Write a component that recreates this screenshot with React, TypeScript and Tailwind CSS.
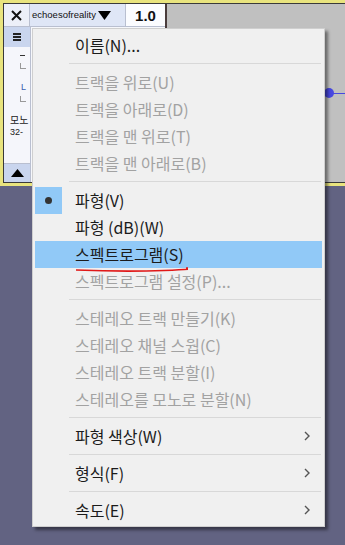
import React from "react";

type It =
  | { kind: "sep" }
  | { kind: "item"; label: string; disabled?: boolean; checked?: boolean; highlight?: boolean; sub?: boolean };

const items: It[] = [
  { kind: "item", label: "이름(N)..." },
  { kind: "sep" },
  { kind: "item", label: "트랙을 위로(U)", disabled: true },
  { kind: "item", label: "트랙을 아래로(D)", disabled: true },
  { kind: "item", label: "트랙을 맨 위로(T)", disabled: true },
  { kind: "item", label: "트랙을 맨 아래로(B)", disabled: true },
  { kind: "sep" },
  { kind: "item", label: "파형(V)", checked: true },
  { kind: "item", label: "파형 (dB)(W)" },
  { kind: "item", label: "스펙트로그램(S)", highlight: true },
  { kind: "item", label: "스펙트로그램 설정(P)...", disabled: true },
  { kind: "sep" },
  { kind: "item", label: "스테레오 트랙 만들기(K)", disabled: true },
  { kind: "item", label: "스테레오 채널 스웝(C)", disabled: true },
  { kind: "item", label: "스테레오 트랙 분할(I)", disabled: true },
  { kind: "item", label: "스테레오를 모노로 분할(N)", disabled: true },
  { kind: "sep" },
  { kind: "item", label: "파형 색상(W)", sub: true },
  { kind: "sep" },
  { kind: "item", label: "형식(F)", sub: true },
  { kind: "sep" },
  { kind: "item", label: "속도(E)", sub: true },
];

function Row({ it }: { it: Extract<It, { kind: "item" }> }) {
  return (
    <div className={`relative flex h-[27px] items-center ${it.highlight ? "bg-[#91c9f7]" : ""}`}>
      <div className={`flex h-full w-[27px] items-center justify-center ${it.checked ? "bg-[#91c9f7]" : ""}`}>
        {it.checked && <div className="h-[7px] w-[7px] rounded-full bg-[#333]" />}
      </div>
      <span
        className={`ml-[13px] whitespace-nowrap text-[16px] leading-none ${it.disabled ? "text-[#a2a2a2]" : "text-[#1b1b1b]"}`}
      >
        {it.label}
      </span>
      {it.sub && (
        <svg className="ml-auto mr-[12px]" width="6" height="10" viewBox="0 0 6 10">
          <polyline points="1,1 5,5 1,9" fill="none" stroke="#555" strokeWidth="1.4" />
        </svg>
      )}
    </div>
  );
}

export default function App() {
  return (
    <div className="relative h-[545px] w-[345px] overflow-hidden bg-[#626382] font-['Noto_Sans_CJK_KR','Noto_Sans',sans-serif]">
      {/* track area */}
      <div className="h-[186px] bg-[#e9e47e] pb-[3px] pt-[3px] pl-[3px]">
        <div className="flex h-full border-l border-t border-b border-[#3a3a3a]">
          {/* control panel */}
          <div className="flex w-[161px] flex-col bg-[#f7f8fc]">
            <div className="flex h-[23px] border-b border-[#b9bfd0]">
              <div className="flex w-[26px] items-center justify-center border-r border-[#b9bfd0] bg-[#eceff8]">
                <svg width="11" height="11" viewBox="0 0 11 11">
                  <path d="M1 1 L10 10 M10 1 L1 10" stroke="#111" strokeWidth="2" />
                </svg>
              </div>
              <div className="flex w-[96px] items-center border-r border-[#b9bfd0] bg-[#dfe6f6] pl-[2px]">
                <span className="font-['Liberation_Sans',sans-serif] text-[9.5px] leading-none text-[#111]">echoesofreality</span>
                <svg className="ml-[2px]" width="13" height="9" viewBox="0 0 13 9">
                  <polygon points="0,0 13,0 6.5,9" fill="#000" />
                </svg>
              </div>
              <div className="flex flex-1 items-center justify-center bg-[#fbfcff]">
                <span className="font-['Liberation_Sans',sans-serif] text-[15px] font-bold leading-none text-[#111]">1.0</span>
              </div>
            </div>
            <div className="flex flex-1">
              <div className="flex w-[27px] flex-col border-r border-[#b9bfd0] bg-[#f5f6fb]">
                <div className="flex h-[20px] items-center justify-center bg-[#c9d5ee]">
                  <div className="flex flex-col gap-[1px]">
                    <div className="h-[2px] w-[8px] bg-[#222]" />
                    <div className="h-[2px] w-[8px] bg-[#222]" />
                    <div className="h-[2px] w-[8px] bg-[#222]" />
                  </div>
                </div>
                <div className="relative flex-1 font-['Liberation_Sans',sans-serif] text-[9px] leading-none">
                  <div className="ml-[16px] mt-[8px] h-[1px] w-[5px] bg-[#333]" />
                  <div className="ml-[16px] mt-[7px] h-[5px] w-[1px] bg-[#999]" />
                  <div className="ml-[16px] h-[1px] w-[6px] bg-[#999]" />
                  <div className="ml-[17px] mt-[14px] text-[#3a5fb0]">L</div>
                  <div className="ml-[16px] mt-[4px] h-[5px] w-[1px] bg-[#999]" />
                  <div className="ml-[16px] h-[1px] w-[6px] bg-[#999]" />
                  <div className="ml-[6px] mt-[13px] font-['Noto_Sans_CJK_KR',sans-serif] text-[10px] text-[#222]">모노</div>
                  <div className="ml-[6px] mt-[3px] text-[#222]">32-</div>
                </div>
                <div className="flex h-[19px] items-center justify-center border-t border-[#b9bfd0] bg-[#c9d5ee]">
                  <svg width="13" height="8" viewBox="0 0 13 8">
                    <polygon points="0,8 13,8 6.5,0" fill="#000" />
                  </svg>
                </div>
              </div>
              <div className="flex-1 bg-[#f7f8fc]" />
            </div>
          </div>
          <div className="w-[2px] bg-[#4a3c3c]" />
          {/* waveform */}
          <div className="relative flex-1 bg-[#c0c0c0]">
            <div className="absolute left-[157px] top-[84px] h-[10px] w-[10px] rounded-full bg-[#4848e0]" />
            <div className="absolute left-[163px] top-[89px] h-[1px] w-[20px] bg-[#4848e0]" />
          </div>
        </div>
      </div>

      {/* red mark under dropdown */}
      <div className="absolute left-[105px] top-[28px] h-[2px] w-[25px] bg-[#e02020]" />

      {/* context menu */}
      <div className="absolute left-[32px] top-[28px] w-[293px] border border-[#cfcfcf] bg-[#f0f0f0] py-[2.5px] px-[2px] shadow-[3px_3px_3px_rgba(0,0,0,0.45)]">
        {items.map((it, i) =>
          it.kind === "sep" ? (
            <div key={i} className="flex h-[10px] items-center pl-[34px] pr-[1px]">
              <div className="h-[1px] w-full bg-[#d8d8d8]" />
            </div>
          ) : (
            <Row key={i} it={it} />
          )
        )}
      </div>

      {/* red underline under 스펙트로그램 */}
      <svg className="absolute left-[74px] top-[265px]" width="114" height="8" viewBox="0 0 114 8">
        <path d="M2 5 Q 50 7 90 5.5 T 112 3" fill="none" stroke="#e01818" strokeWidth="1.6" />
      </svg>
    </div>
  );
}
